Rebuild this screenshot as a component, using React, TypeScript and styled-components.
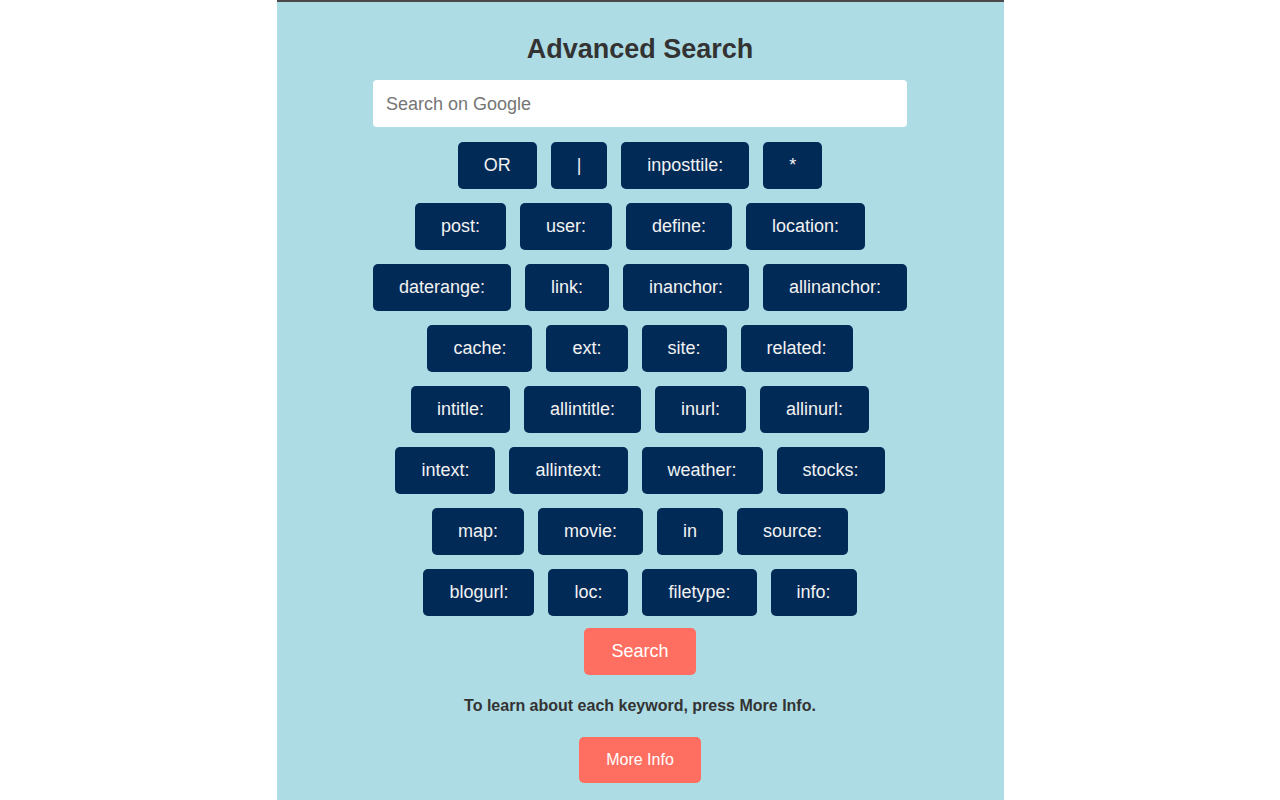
import React from "react";
import styled, { createGlobalStyle } from "styled-components";

const Global = createGlobalStyle`
  html, body { margin: 0; padding: 0; background: #ffffff; }
  body { font-family: "Liberation Sans", Arial, sans-serif; }
`;

const Panel = styled.main`
  width: 727px;
  min-height: 800px;
  margin: 0 auto;
  box-sizing: border-box;
  border-top: 2px solid #4a4a4a;
  background: #aedce5;
  padding-top: 32px;
  display: flex;
  flex-direction: column;
  align-items: center;
`;

const Title = styled.h1`
  margin: 0;
  font-size: 27px;
  line-height: 31px;
  font-weight: bold;
  color: #333333;
`;

const SearchInput = styled.input`
  margin-top: 15px;
  width: 534px;
  height: 47px;
  box-sizing: border-box;
  border: none;
  border-radius: 4px;
  background: #ffffff;
  padding: 1px 13px 0;
  font-family: "Liberation Sans", Arial, sans-serif;
  font-size: 18px;
  color: #333;
  outline: none;
  &::placeholder { color: #757575; }
`;

const Rows = styled.div`
  margin-top: 15px;
  display: flex;
  flex-direction: column;
  gap: 14px;
  align-items: center;
`;

const Row = styled.div`
  display: flex;
  gap: 14px;
  justify-content: center;
`;

const KeyButton = styled.button`
  height: 47px;
  padding: 0 26px;
  border: none;
  border-radius: 5px;
  background: #022a56;
  color: #f2f2f2;
  font-family: "Liberation Sans", Arial, sans-serif;
  font-size: 18px;
  cursor: pointer;
`;

const ActionButton = styled.button<{ $size: number; $h: number }>`
  height: ${(p) => p.$h}px;
  padding: 0 27px;
  border: none;
  border-radius: 5px;
  background: #ff6f61;
  color: #ffffff;
  font-family: "Liberation Sans", Arial, sans-serif;
  font-size: ${(p) => p.$size}px;
  cursor: pointer;
`;

const SearchBtn = styled(ActionButton)`
  margin-top: 12px;
`;

const Hint = styled.p`
  margin: 21px 0 0;
  font-size: 16px;
  line-height: 20px;
  font-weight: bold;
  color: #333333;
`;

const MoreBtn = styled(ActionButton)`
  margin-top: 21px;
`;

const rows: string[][] = [
  ["OR", "|", "inposttile:", "*"],
  ["post:", "user:", "define:", "location:"],
  ["daterange:", "link:", "inanchor:", "allinanchor:"],
  ["cache:", "ext:", "site:", "related:"],
  ["intitle:", "allintitle:", "inurl:", "allinurl:"],
  ["intext:", "allintext:", "weather:", "stocks:"],
  ["map:", "movie:", "in", "source:"],
  ["blogurl:", "loc:", "filetype:", "info:"],
];

export default function App() {
  return (
    <>
      <Global />
      <Panel>
        <Title>Advanced Search</Title>
        <SearchInput placeholder="Search on Google" />
        <Rows>
          {rows.map((r, i) => (
            <Row key={i}>
              {r.map((k) => (
                <KeyButton key={k}>{k}</KeyButton>
              ))}
            </Row>
          ))}
        </Rows>
        <SearchBtn $size={18} $h={47}>Search</SearchBtn>
        <Hint>To learn about each keyword, press More Info.</Hint>
        <MoreBtn $size={16} $h={46}>More Info</MoreBtn>
      </Panel>
    </>
  );
}
